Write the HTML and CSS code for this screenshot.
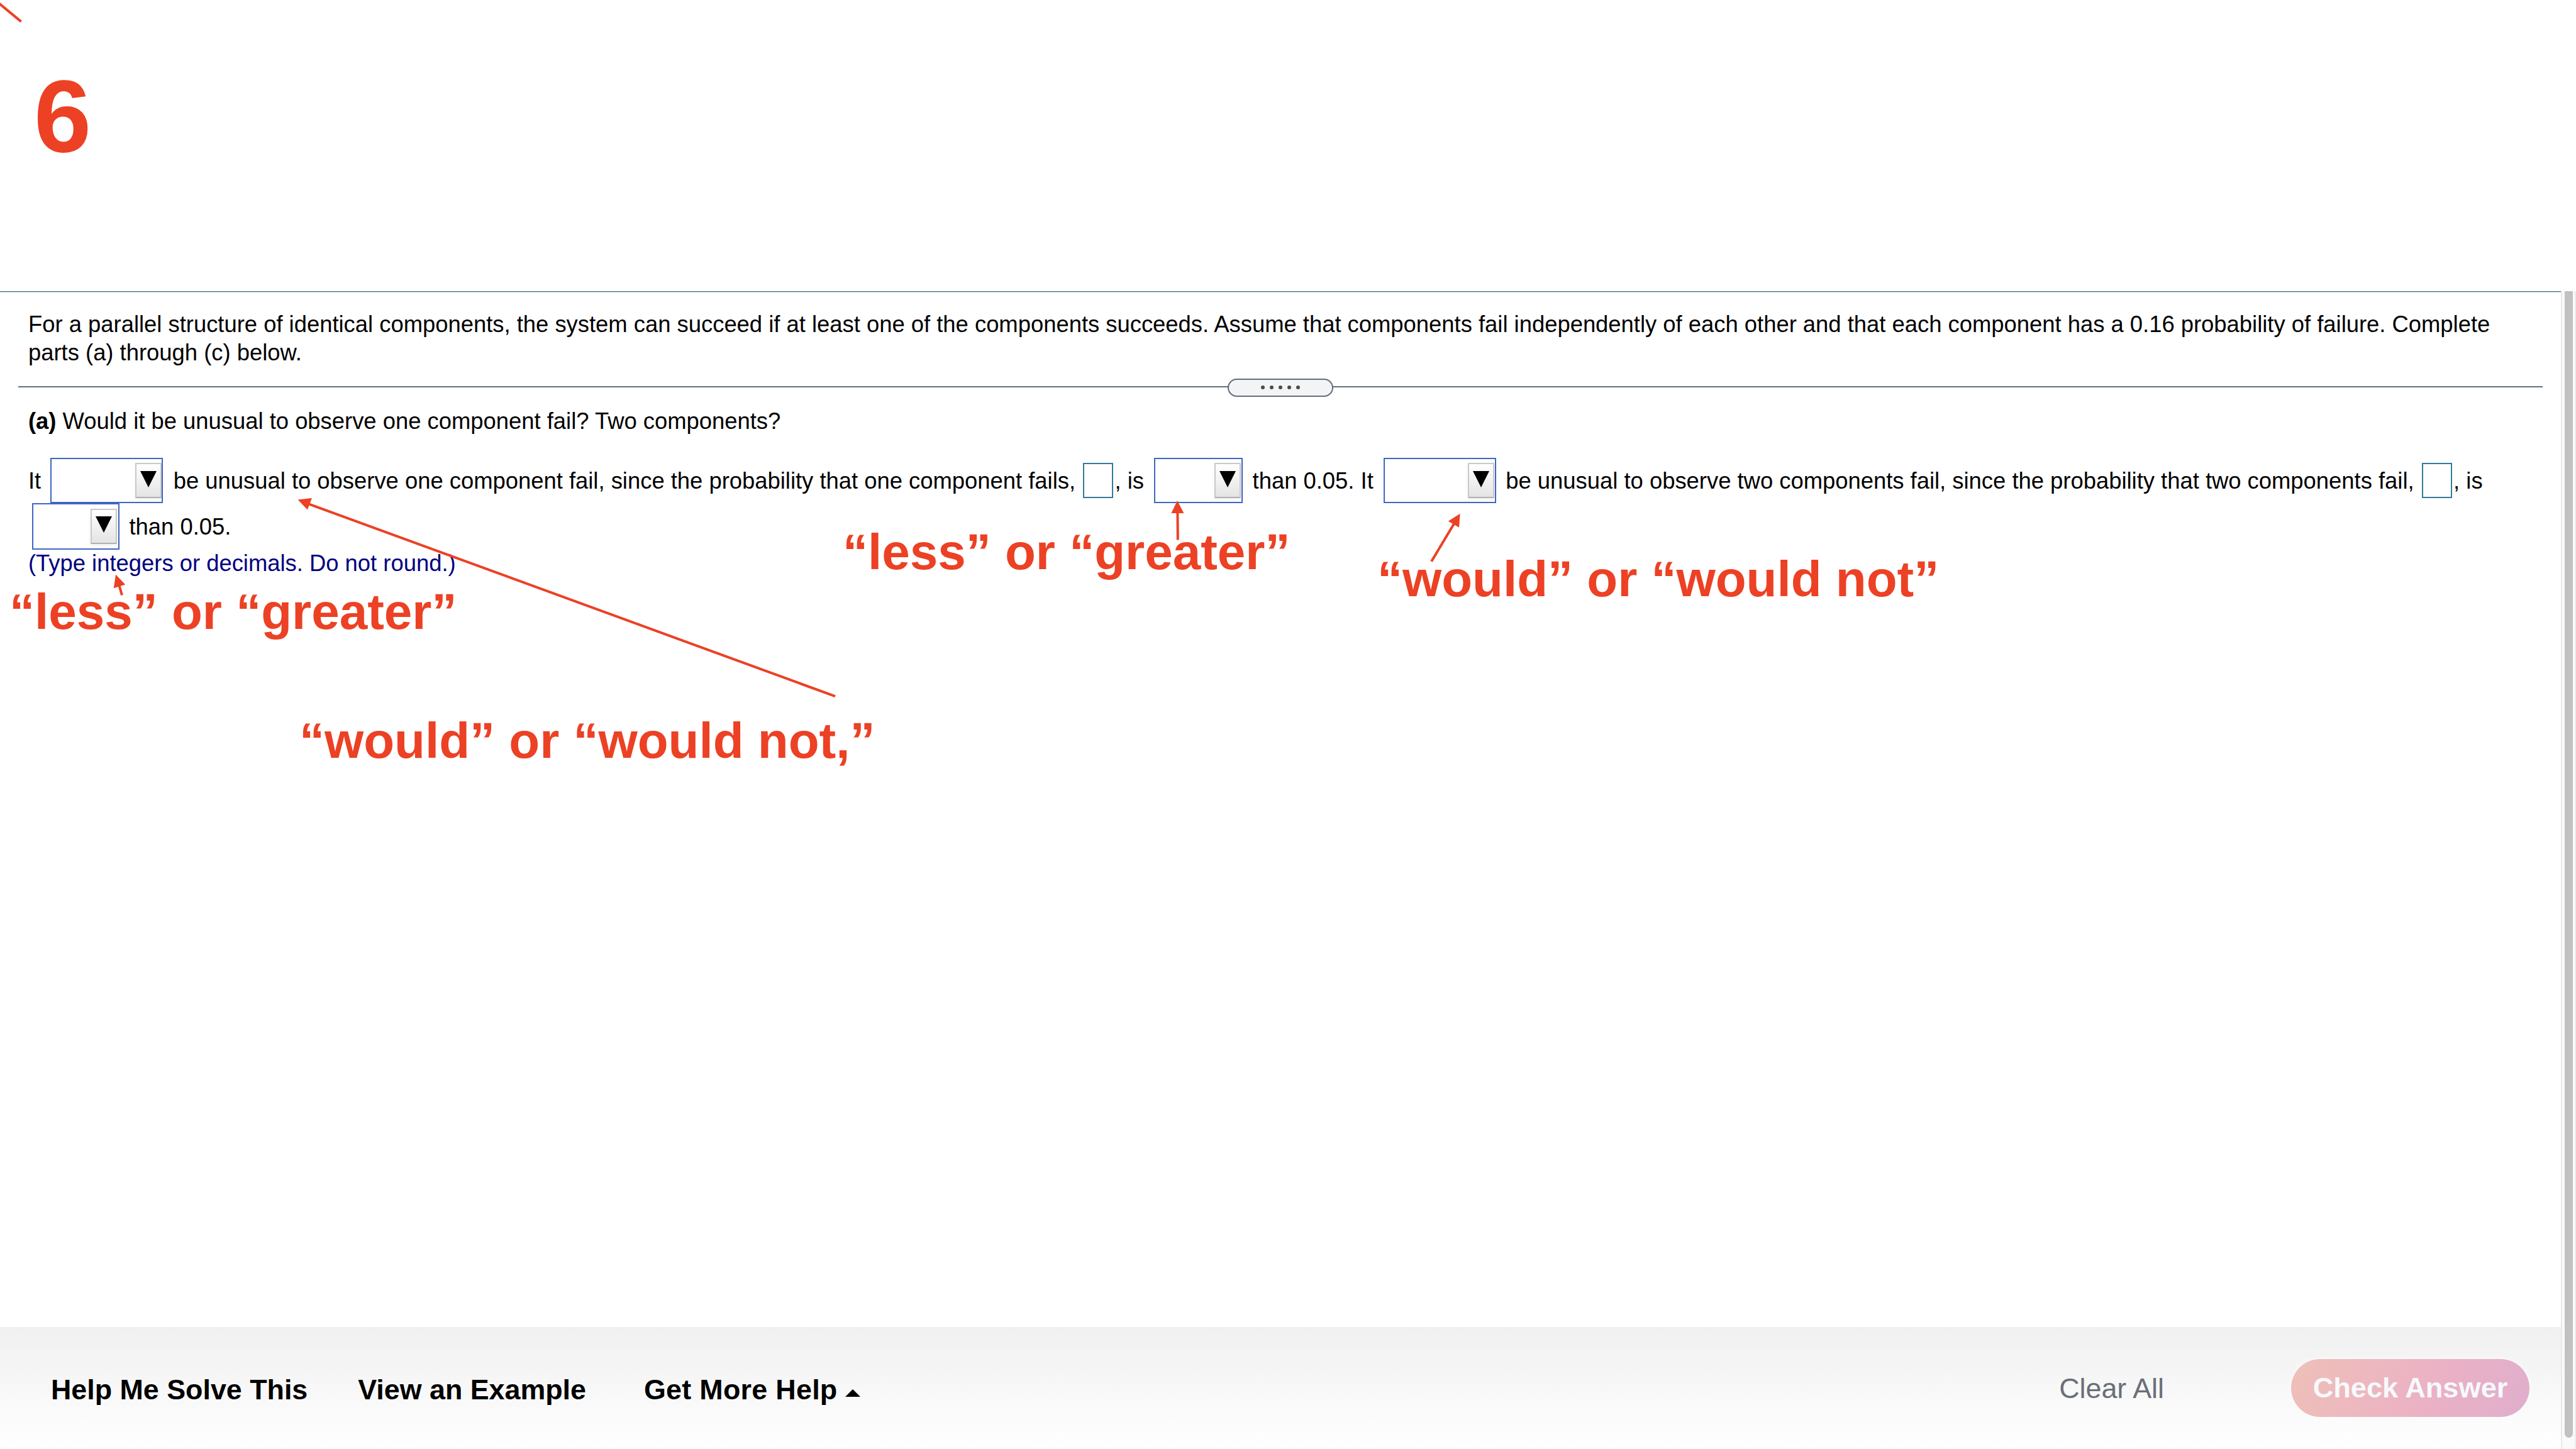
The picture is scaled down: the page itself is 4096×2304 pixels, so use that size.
FILE: index.html
```html
<!DOCTYPE html>
<html lang="en">
<head>
  <meta charset="UTF-8">
  <meta name="viewport" content="width=device-width, initial-scale=1">
  <title>Question 6</title>
  <link rel="stylesheet" href="styles.css">
</head>
<body>
  <header class="top"><h1>6</h1></header>

  <div class="frame">
    <div class="page">
      <main class="question">
        <p class="intro">For a parallel structure of identical components, the system can succeed if at least one of the components succeeds. Assume that components fail independently of each other and that each component has a 0.16 probability of failure. Complete<br>parts (a) through (c) below.</p>

        <div class="divider">
          <div class="handle"><i></i><i></i><i></i><i></i><i></i></div>
        </div>

        <p class="part"><b>(a)</b> Would it be unusual to observe one component fail? Two components?</p>

        <div class="row">
          <span>It</span>
          <div class="select wide flush"><div class="arrow"><svg viewBox="0 0 26 26"><path d="M0 0h26L13 26z"/></svg></div></div>
          <span>be unusual to observe one component fail, since the probability that one component fails,</span>
          <div class="blank"></div>
          <span>, is</span>
          <div class="select"><div class="arrow"><svg viewBox="0 0 26 26"><path d="M0 0h26L13 26z"/></svg></div></div>
          <span>than 0.05. It</span>
          <div class="select wide"><div class="arrow"><svg viewBox="0 0 26 26"><path d="M0 0h26L13 26z"/></svg></div></div>
          <span>be unusual to observe two components fail, since the probability that two components fail,</span>
          <div class="blank"></div>
          <span>, is</span>
        </div>
        <div class="row second">
          <div class="select"><div class="arrow"><svg viewBox="0 0 26 26"><path d="M0 0h26L13 26z"/></svg></div></div>
          <span>than 0.05.</span>
        </div>
        <p class="hint">(Type integers or decimals. Do not round.)</p>
      </main>

      <footer class="footer">
        <a class="help">Help Me Solve This</a>
        <a class="example">View an Example</a>
        <a class="more">Get More Help <svg class="caret" viewBox="0 0 24 12"><path d="M0 12L12 0l12 12z"/></svg></a>
        <a class="clear">Clear All</a>
        <button class="check">Check Answer</button>
      </footer>
    </div>
    <div class="scrollbar"><div class="thumb"></div></div>
  </div>

  <!-- notes drawn over the question -->
  <svg class="arrows" viewBox="0 0 5120 2880">
    <path class="line" d="M-4 5L42 43M1660 1384L612 1001M242.500 1183L237 1164M2341 1073L2340.500 1018M2845 1116L2890 1041"/>
    <path d="M592 993l28-3-9 23zM230 1142l-4 27 23-7zM2340 995l-12 25h25zM2902 1021l-23.500 15 21.500 12.500z"/>
  </svg>
  <div class="note note-1">“less” or “greater”</div>
  <div class="note note-2">“less” or “greater”</div>
  <div class="note note-3">“would” or “would not”</div>
  <div class="note note-4">“would” or “would not,”</div>
</body>
</html>
```
FILE: styles.css
```css
* {
  box-sizing: border-box;
}
body {
  font-family: "Liberation Sans", Arial, sans-serif;
  font-size: 36.4px;
  line-height: 44.8px;
  margin: 0;
  width: 4096px;
  height: 2304px;
  background: #fff;
  color: #000;
  position: relative;
  overflow: hidden;
  display: flex;
  flex-direction: column;
}
p, h1 {
  margin: 0;
}
.top {
  height: 463px;
  padding: 95px 0 0 54px;
}
h1 {
  font-size: 164px;
  line-height: 180px;
  color: #ec4124;
}
.frame {
  flex: 1;
  display: flex;
}
.page {
  width: 4072px;
  display: flex;
  flex-direction: column;
  border-top: 1px solid #33708f;
}
.question {
  flex: 1;
  border-top: 1px solid #ccccda;
  padding: 29px 29px 0 45px;
}
.intro {
  white-space: nowrap;
}
.divider {
  height: 29px;
  margin: 18px 0 0 -16px;
  display: flex;
  align-items: center;
  justify-content: center;
  background: linear-gradient(#616e7e, #616e7e) 0 12px / 100% 2px no-repeat;
}
.handle {
  width: 168px;
  height: 29px;
  border: 2px solid #616e7e;
  border-radius: 15px;
  background: #f3f4f6;
  display: flex;
  align-items: center;
  justify-content: center;
  gap: 7.500px;
}
.handle i {
  width: 6.500px;
  height: 6.500px;
  border-radius: 50%;
  background: #4a4a4a;
}
.part {
  margin-top: 17px;
}
.row {
  display: flex;
  align-items: center;
  height: 72px;
  margin-top: 36px;
  white-space: nowrap;
}
.row span {
  padding-top: 2px;
}
.row.second {
  height: 74px;
  margin-top: 0;
}
.select {
  width: 141px;
  height: 72px;
  margin: 0 15.500px 0 16px;
  border: 2px solid #3f66c4;
  padding-right: 1px;
  display: flex;
  align-items: center;
  justify-content: flex-end;
}
.wide {
  width: 179px;
}
.flush {
  padding-right: 0;
  margin-left: 15px;
  margin-right: 16.500px;
}
.second .select {
  width: 139px;
  height: 74px;
  margin-left: 6px;
  padding-right: 2px;
}
.arrow {
  width: 42px;
  height: 56px;
  border: 2px solid #c9c9c9;
  border-bottom-color: #b0b0b0;
  background: linear-gradient(#fff, #e4e4e4);
  box-shadow: 0 3px 6px rgba(0,0,0,0.06);
  display: flex;
  justify-content: center;
  padding-top: 11px;
}
.second .arrow {
  padding-top: 10px;
}
.arrow svg {
  width: 26px;
  height: 26px;
}
.blank {
  width: 48px;
  height: 56px;
  margin: 0 2.500px 0 12px;
  border: 2px solid #33799b;
}
.hint {
  color: #000080;
}
.footer {
  height: 194px;
  background: linear-gradient(#f0f0f0, #fff);
  font-size: 44.8px;
  line-height: 52px;
  display: flex;
  align-items: center;
  padding: 0 50px 0 81px;
}
.help, .example, .more {
  font-weight: bold;
  padding-top: 3px;
}
.help {
  margin-right: 80px;
}
.example {
  margin-right: 92px;
}
.more {
  letter-spacing: 0.3px;
}
.caret {
  width: 24px;
  height: 12px;
  margin-bottom: 4px;
}
.clear {
  margin-left: auto;
  color: #6a6f78;
}
.check {
  width: 379px;
  height: 92px;
  margin-left: 202px;
  padding: 0;
  border: 0;
  border-radius: 46px;
  background: linear-gradient(115deg, #efc0b8, #ebb1c5 60%, #dfaecc);
  box-shadow: 0 0 12px rgba(255,255,255,0.6);
  color: #f7f9fc;
  font: bold 45.2px/52px "Liberation Sans", Arial, sans-serif;
}
.scrollbar {
  width: 24px;
  background: #fafafa;
  border-left: 2px solid #e8e8e8;
  border-right: 2px solid #ededed;
  padding-left: 4px;
}
.thumb {
  width: 13px;
  height: 1823px;
  border-radius: 0 0 7px 7px;
  background: #c1c1c1;
}
.arrows {
  position: absolute;
  left: 0;
  top: 0;
  width: 4096px;
  height: 2304px;
  fill: #ec4124;
}
.line {
  stroke: #ec4124;
  stroke-width: 5;
  fill: none;
}
.note {
  position: absolute;
  font-size: 80px;
  font-weight: bold;
  line-height: 90px;
  color: #ec4124;
  white-space: nowrap;
}
.note-1 {
  left: 15px;
  top: 928px;
}
.note-2 {
  left: 1340px;
  top: 833px;
}
.note-3 {
  left: 2190px;
  top: 876px;
}
.note-4 {
  left: 476px;
  top: 1133px;
}
```
